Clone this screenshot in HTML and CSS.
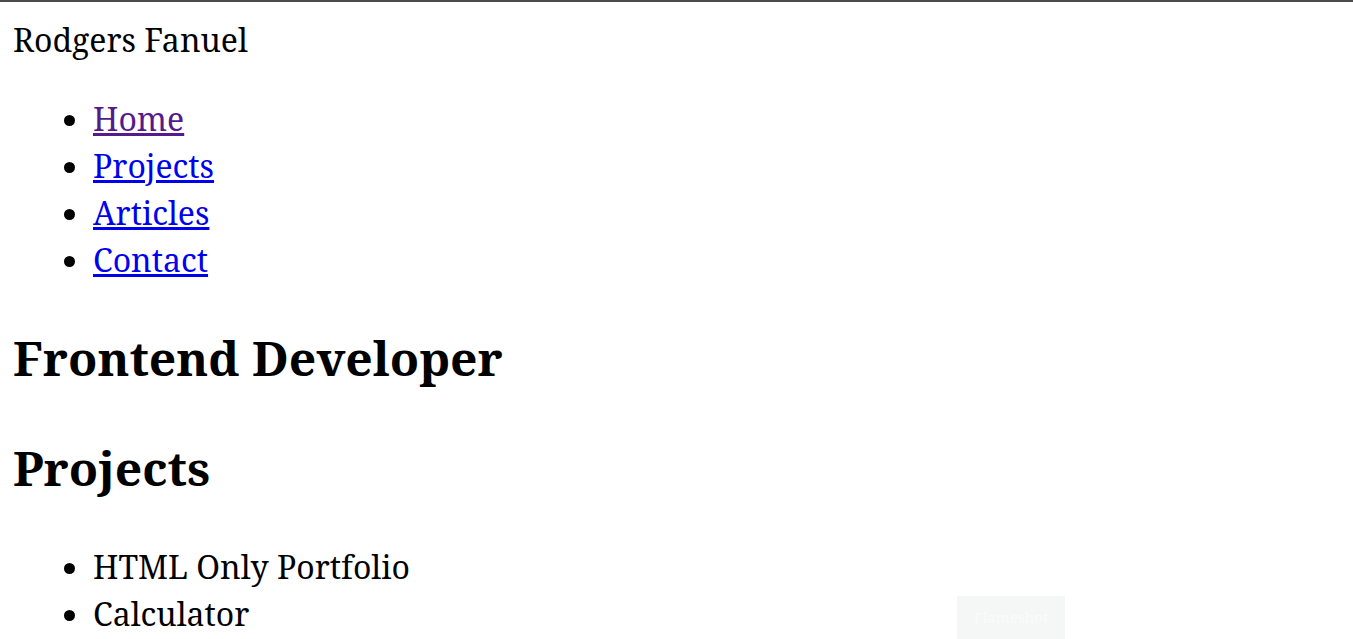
FILE: index.html
```html
<!DOCTYPE html>
<html>
<head>
<meta charset="utf-8">
<link rel="stylesheet" href="styles.css">
</head>
<body>
<div class="topbar"></div>
<div class="page">
  <header>
    <div class="name">Rodgers Fanuel</div>
    <nav>
      <ul class="list">
        <li><a class="visited" href="#">Home</a></li>
        <li><a href="#">Projects</a></li>
        <li><a href="#">Articles</a></li>
        <li><a href="#">Contact</a></li>
      </ul>
    </nav>
  </header>
  <main>
    <h2 class="heading">Frontend Developer</h2>
    <h2 class="heading">Projects</h2>
    <ul class="list">
      <li>HTML Only Portfolio</li>
      <li>Calculator</li>
    </ul>
  </main>
</div>
<div class="flameshot">Flameshot</div>
</body>
</html>
```
FILE: styles.css
```css
html, body {
  margin: 0;
  padding: 0;
  background: #ffffff;
}
body {
  font-family: "Noto Serif", "DejaVu Serif", serif;
  font-size: 32px;
  line-height: 1.47;
  color: #000;
  overflow: hidden;
  height: 639px;
}
.topbar {
  height: 2px;
  background: #4b4b4b;
}
.page {
  padding: 14px 13px 0;
}
.list {
  margin: 32px 0;
  padding-left: 80px;
}
.list a {
  color: #0000ee;
}
.list a.visited {
  color: #551a8b;
}
.heading {
  font-size: 48px;
  font-weight: bold;
  margin: 39.5px 0;
}
.flameshot {
  position: absolute;
  left: 957px;
  top: 596px;
  width: 108px;
  height: 43px;
  background: #f5f6f6;
  color: #fbfbfb;
  font-size: 15px;
  line-height: 43px;
  text-align: center;
}
```
